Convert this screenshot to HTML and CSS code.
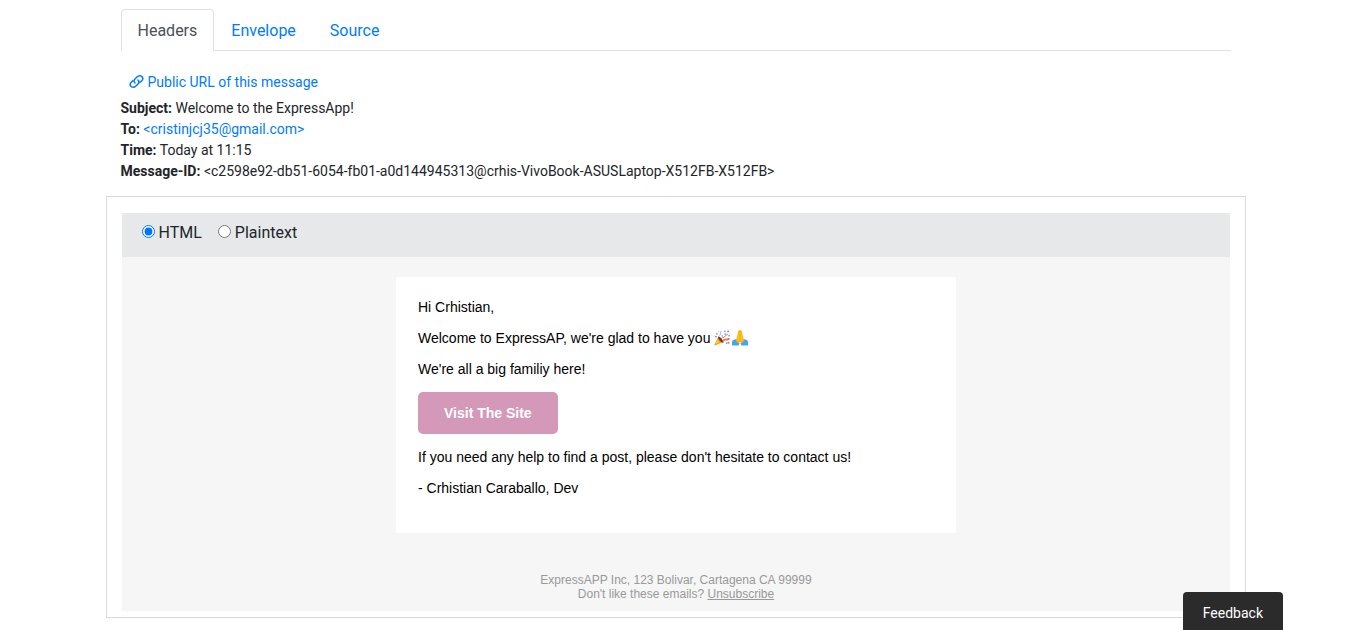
FILE: index.html
```html
<!DOCTYPE html>
<html lang="en">
<head>
<meta charset="utf-8">
<meta name="viewport" content="width=device-width, initial-scale=1">
<title>Message</title>
<link rel="stylesheet" href="styles.css">
</head>
<body>
<main class="container">
  <section class="details">
    <nav class="tabs">
      <a class="tab tab-active" href="#headers">Headers</a>
      <a class="tab" href="#envelope">Envelope</a>
      <a class="tab" href="#source">Source</a>
    </nav>
    <div class="headers" id="headers">
      <a class="public-link" href="#public">
        <svg class="link-icon" viewBox="0 0 30 30" aria-hidden="true"><path d="M12 18c-3-3-2-6 0-8l4-4c3-3 7-3 10-1 2 3 2 6 0 8l-4 4"/><path d="M18 12c3 3 2 6 0 8l-4 4c-3 3-7 3-10 1-2-3-2-6 0-8l4-4"/></svg>
        <span>Public URL of this message</span>
      </a>
      <div><b>Subject:</b> Welcome to the ExpressApp!</div>
      <div><b>To:</b> <a href="#to">&lt;cristinjcj35@gmail.com&gt;</a></div>
      <div><b>Time:</b> Today at 11:15</div>
      <div><b>Message-ID:</b> &lt;c2598e92-db51-6054-fb01-a0d144945313@crhis-VivoBook-ASUSLaptop-X512FB-X512FB&gt;</div>
    </div>
  </section>
  <section class="preview">
    <form class="view-switch">
      <label class="option"><input class="radio" type="radio" name="view" checked>HTML</label>
      <label class="option"><input class="radio" type="radio" name="view">Plaintext</label>
    </form>
    <div class="email">
      <article class="card">
        <p>Hi Crhistian,</p>
        <p>Welcome to ExpressAP, we're glad to have you
          <svg class="emoji" viewBox="0 0 34 34" role="img" aria-label="Party popper">
            <path fill="#f9a11b" d="M9 15 1 31q-1 2 1 2l17-7z"/>
            <path fill="#ffca28" d="m7 20-4 10 8-4z"/>
            <path fill="#6d3b2a" d="M9 14c-3 3 7 15 11 13 2-2-8-15-11-13z"/>
            <path fill="none" stroke="#f4694c" stroke-width="2" d="M15 19c3-2 3-5 2-8M19 17l11-9"/>
            <path fill="none" stroke="#f4694c" stroke-width="4" d="M19 23c4-5 6-1 9-3s3-1 5 0"/>
            <path fill="none" stroke="#64b5f6" stroke-width="2" d="M12 12c3-3 0-5 3-9"/>
            <g fill="#64b5f6"><circle cx="6" cy="8" r="2"/><circle cx="23" cy="3" r="2"/><circle cx="32" cy="12" r="2"/><circle cx="24" cy="9" r="2"/><circle cx="27" cy="28" r="2"/></g>
            <g fill="#f4694c"><circle cx="10" cy="3" r="1"/><circle cx="30" cy="3" r="2"/><circle cx="4" cy="14" r="2"/><circle cx="31" cy="27" r="2"/></g>
          </svg><svg class="emoji" viewBox="0 0 34 34" role="img" aria-label="Folded hands">
            <path fill="#42a5f5" d="M3 21q-3 1-3 4v8h14l2-5-7-9zM31 21q3 1 3 4v8H20l-2-5 7-9z"/>
            <path fill="#ffb300" d="M17 1c-3-2-4 1-4 3L10 17q-3 6 0 8l4 3 3-3 3 3 4-3q3-2 0-8L21 4c0-2-1-5-4-3z"/>
            <path fill="#ffca28" d="M16 3c-3 6-4 14-4 19l4 2zM18 3c3 6 4 14 4 19l-4 2z"/>
            <path fill="none" stroke="#ef9700" d="M17 3v22"/>
          </svg></p>
        <p>We're all a big familiy here!</p>
        <a class="visit" href="#site">Visit The Site</a>
        <p>If you need any help to find a post, please don't hesitate to contact us!</p>
        <p>- Crhistian Caraballo, Dev</p>
      </article>
      <footer class="email-footer">
        <div>ExpressAPP Inc, 123 Bolivar, Cartagena CA 99999</div>
        <div>Don't like these emails? <a class="unsubscribe" href="#unsubscribe">Unsubscribe</a></div>
      </footer>
    </div>
  </section>
</main>
<button class="feedback" type="button">Feedback</button>
</body>
</html>
```
FILE: styles.css
```css
* { box-sizing: border-box; }

body {
  margin: 0;
  background: #fff;
  color: #212529;
  font: 16px/24px Roboto, sans-serif;
}

a { color: #007bff; text-decoration: none; }

.container {
  max-width: 1140px;
  margin: 0 auto;
  padding-top: 9px;
}

.details { padding: 0 15px; }

.tabs {
  display: flex;
  border-bottom: 1px solid #dee2e6;
}

.tab {
  margin-bottom: -1px;
  padding: 9px 16px 7px;
  border: 1px solid transparent;
  border-radius: 4px 4px 0 0;
}

.tab-active {
  border-color: #dee2e6 #dee2e6 #fff;
  background: #fff;
  color: #495057;
}

.headers {
  padding: 16px 0 14px;
  font-size: 14px;
  line-height: 21px;
  overflow-wrap: anywhere;
}

.public-link {
  display: flex;
  align-items: center;
  gap: 4px;
  padding: 5px 8px;
}

.link-icon {
  width: 15px;
  height: 15px;
  margin-bottom: 2px;
  fill: none;
  stroke: currentColor;
  stroke-width: 3;
  stroke-linecap: round;
}

.preview {
  padding: 16px 15px 6px;
  border: 1px solid #d8d8e5;
}

.view-switch {
  display: flex;
  gap: 16px;
  padding: 8px 20px 12px;
  background: #e6e8e9;
}

.option {
  display: flex;
  align-items: center;
  gap: 4px;
}

.radio {
  width: 13px;
  height: 13px;
  margin: 0 0 3px;
}

.email {
  padding: 20px 10px 10px 11px;
  background: #f6f6f6;
  font-family: "Liberation Sans", Arial, sans-serif;
}

.card {
  max-width: 560px;
  margin: 0 auto;
  padding: 22px 22px 37px;
  border-radius: 3px;
  background: #fff;
  color: #000;
  font-size: 14px;
  line-height: 16px;
}

.card p { margin: 0 0 15px; }
.card p:last-child { margin: 0; }

.emoji {
  width: 16px;
  height: 16px;
  margin-right: 2px;
  vertical-align: top;
}

.visit {
  display: table;
  margin-bottom: 15px;
  padding: 13px 26px;
  border-radius: 5px;
  background: #d498b9;
  color: #fff;
  font-weight: bold;
}

.email-footer {
  padding-top: 40px;
  color: #999;
  font-size: 12px;
  line-height: 14px;
  text-align: center;
}

.unsubscribe { color: #999; text-decoration: underline; }

.feedback {
  position: fixed;
  right: 68px;
  bottom: 0;
  padding: 11px 20px 6px;
  border: 0;
  border-radius: 4px 4px 0 0;
  background: #2b2b2b;
  color: #fff;
  font: 14px/21px Roboto, sans-serif;
}
```
